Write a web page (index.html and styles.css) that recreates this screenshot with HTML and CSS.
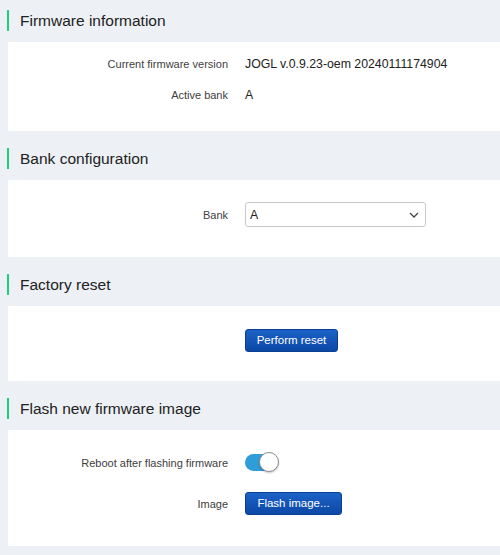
FILE: index.html
```html
<!DOCTYPE html>
<html>
<head>
<meta charset="utf-8">
<link rel="stylesheet" href="styles.css">
</head>
<body>
<div class="page">
  <section class="section">
    <h3 class="title">Firmware information</h3>
    <div class="card card-info">
      <div class="row">
        <div class="label">Current firmware version</div>
        <div class="value">JOGL v.0.9.23-oem 20240111174904</div>
      </div>
      <div class="row">
        <div class="label">Active bank</div>
        <div class="value">A</div>
      </div>
    </div>
  </section>

  <section class="section">
    <h3 class="title">Bank configuration</h3>
    <div class="card card-bank">
      <div class="row">
        <div class="label">Bank</div>
        <div class="value">
          <div class="select">
            <span>A</span>
            <svg class="chev" width="10" height="6" viewBox="0 0 10 6"><path d="M1 1l4 4 4-4" fill="none" stroke="#444" stroke-width="1.3"/></svg>
          </div>
        </div>
      </div>
    </div>
  </section>

  <section class="section">
    <h3 class="title">Factory reset</h3>
    <div class="card card-reset">
      <div class="row">
        <div class="label"></div>
        <div class="value"><button class="btn btn-reset">Perform reset</button></div>
      </div>
    </div>
  </section>

  <section class="section">
    <h3 class="title">Flash new firmware image</h3>
    <div class="card card-flash">
      <div class="row row-toggle">
        <div class="label">Reboot after flashing firmware</div>
        <div class="value">
          <span class="toggle"><span class="knob"></span></span>
        </div>
      </div>
      <div class="row">
        <div class="label">Image</div>
        <div class="value"><button class="btn btn-flash">Flash image...</button></div>
      </div>
    </div>
  </section>
</div>
</body>
</html>
```

FILE: styles.css
```css
html, body {
  margin: 0;
  padding: 0;
  background: #edf0f5;
}
body {
  font-family: "Liberation Sans", Arial, sans-serif;
  color: #222;
}
.page {
  padding-top: 10px;
  display: flex;
  flex-direction: column;
}
.section {
  display: flex;
  flex-direction: column;
}
.title {
  margin: 0 0 11px 7px;
  padding-left: 11px;
  border-left: 2px solid #1dce7c;
  font-size: 15.5px;
  font-weight: normal;
  line-height: 21px;
  color: #222;
}
.card {
  margin: 0 0 17px 8px;
  background: #fff;
  display: flex;
  flex-direction: column;
}
.card-info { padding: 6px 0 21px; }
.card-bank { padding: 19px 0 27px; }
.card-reset { padding: 19px 0 25px; }
.card-flash { padding: 17px 0 27px; gap: 10px; }
.row {
  display: flex;
  align-items: center;
  min-height: 31px;
}
.label {
  width: 220px;
  text-align: right;
  font-size: 11px;
  color: #404040;
  flex-shrink: 0;
}
.value {
  margin-left: 17px;
  font-size: 12.3px;
  color: #222;
  display: flex;
  align-items: center;
}
.select {
  display: flex;
  align-items: center;
  justify-content: space-between;
  padding: 0 6px 0 4px;
  box-sizing: border-box;
  width: 181px;
  height: 25px;
  border: 1px solid #c8c8c8;
  border-radius: 3px;
}
.chev { margin-top: 1px; }
.btn {
  font-family: "Liberation Sans", Arial, sans-serif;
  font-size: 11.5px;
  color: #fff;
  background: linear-gradient(#1c62c6, #0c48a6);
  border: 1px solid #0a3f93;
  border-radius: 3px;
  height: 23px;
  line-height: 21px;
  padding: 0;
}
.btn-reset { width: 93px; }
.btn-flash { width: 97px; }
.toggle {
  position: relative;
  width: 33px;
  height: 17px;
  border-radius: 9px;
  background: #2f9ed8;
  display: inline-block;
}
.knob {
  position: absolute;
  right: -1px;
  top: -2px;
  width: 18px;
  height: 18px;
  border-radius: 50%;
  background: #fff;
  border: 1px solid #8a8f96;
  box-shadow: 0 1px 2px rgba(0,0,0,0.25);
}
```
